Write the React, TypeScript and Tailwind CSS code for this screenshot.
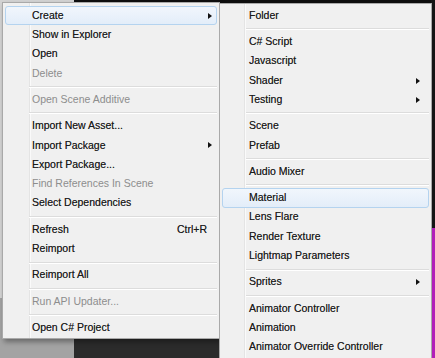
import clsx from "clsx";

type Entry =
  | { sep: true }
  | {
      sep?: false;
      label: string;
      disabled?: boolean;
      arrow?: boolean;
      shortcut?: string;
      active?: boolean;
    };

const leftItems: Entry[] = [
  { label: "Create", arrow: true, active: true },
  { label: "Show in Explorer" },
  { label: "Open" },
  { label: "Delete", disabled: true },
  { sep: true },
  { label: "Open Scene Additive", disabled: true },
  { sep: true },
  { label: "Import New Asset..." },
  { label: "Import Package", arrow: true },
  { label: "Export Package..." },
  { label: "Find References In Scene", disabled: true },
  { label: "Select Dependencies" },
  { sep: true },
  { label: "Refresh", shortcut: "Ctrl+R" },
  { label: "Reimport" },
  { sep: true },
  { label: "Reimport All" },
  { sep: true },
  { label: "Run API Updater...", disabled: true },
  { sep: true },
  { label: "Open C# Project" },
];

const rightItems: Entry[] = [
  { label: "Folder" },
  { sep: true },
  { label: "C# Script" },
  { label: "Javascript" },
  { label: "Shader", arrow: true },
  { label: "Testing", arrow: true },
  { sep: true },
  { label: "Scene" },
  { label: "Prefab" },
  { sep: true },
  { label: "Audio Mixer" },
  { sep: true },
  { label: "Material", active: true },
  { label: "Lens Flare" },
  { label: "Render Texture" },
  { label: "Lightmap Parameters" },
  { sep: true },
  { label: "Sprites", arrow: true },
  { sep: true },
  { label: "Animator Controller" },
  { label: "Animation" },
  { label: "Animator Override Controller" },
];

function Menu(props: {
  items: Entry[];
  className: string;
  gutterClass: string;
  arrowClass: string;
}) {
  return (
    <div
      className={clsx(
        "absolute border border-[#a9a9a9] bg-[#f0f0f0] px-[2px]",
        props.className
      )}
    >
      {/* icon gutter */}
      <div
        className={clsx(
          "absolute top-0 bottom-0 w-[2px] border-l border-l-[#e4e4e4] border-r border-r-[#fafafa]",
          props.gutterClass
        )}
      />
      {props.items.map((it, i) =>
        it.sep ? (
          <div key={i} className="relative h-[7px] ml-[24px] pt-[3px]">
            <div className="h-px bg-[#dcdcdc]" />
            <div className="h-px bg-white" />
          </div>
        ) : (
          <div
            key={i}
            className={clsx(
              "relative flex items-center h-[19.3px] pl-[26px] border rounded-[3px]",
              it.active
                ? "border-[#b4d3ef] bg-gradient-to-b from-[#f1f6fc] to-[#e3edf9]"
                : "border-transparent",
              it.disabled
                ? "text-[#8d8d8d]"
                : "text-[#1c1c1c] [text-shadow:0_0_0.6px_rgba(0,0,0,0.55)]"
            )}
          >
            <span>{it.label}</span>
            {it.shortcut && (
              <span className="ml-auto mr-[9px]">{it.shortcut}</span>
            )}
            {it.arrow && (
              <div
                className={clsx(
                  "absolute top-1/2 -translate-y-1/2 w-0 h-0 border-l-[4px] border-l-[#111] border-y-[3.5px] border-y-transparent",
                  props.arrowClass
                )}
              />
            )}
          </div>
        )
      )}
    </div>
  );
}

export default function App() {
  return (
    <div className="relative w-[435px] h-[358px] overflow-hidden flex text-[10.5px] font-['Liberation_Sans',Arial,sans-serif]">
      {/* background behind the menus */}
      <div className="w-[74px] flex flex-col">
        <div className="flex-1 bg-[#d3d3d3]" />
        <div className="h-[60px] bg-[#a3a3a3]" />
      </div>
      <div className="flex-1 flex flex-col">
        <div className="flex-1 bg-[#0e0e0e]" />
        <div className="h-[120px] bg-[#2b2b2b]" />
      </div>
      <div className="w-[4px] flex flex-col">
        <div className="h-[228px] bg-[#151515]" />
        <div className="flex-1 bg-[#b21fb8]" />
      </div>

      <Menu
        items={leftItems}
        className="left-[2px] top-[2px] w-[218px] pt-[3px] pb-[1px] shadow-[2px_3px_5px_rgba(0,0,0,0.35)]"
        gutterClass="left-[26px]"
        arrowClass="right-[4px]"
      />
      <Menu
        items={rightItems}
        className="left-[219px] top-[3px] w-[213px] pt-[2px] pb-[4px]"
        gutterClass="left-[24px]"
        arrowClass="right-[8px]"
      />
    </div>
  );
}
